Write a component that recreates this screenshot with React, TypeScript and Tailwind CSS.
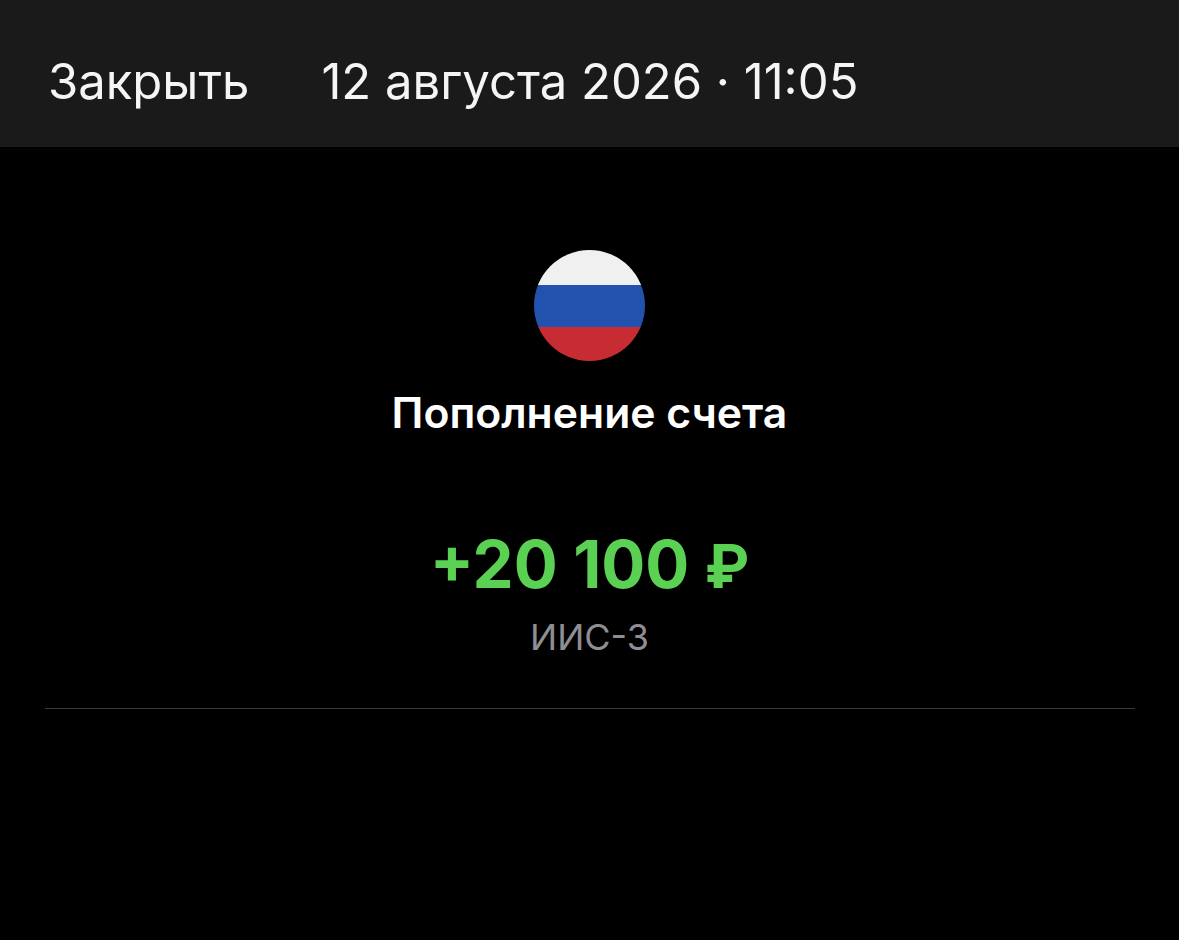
export default function App() {
  return (
    <div className="h-[940px] w-[1179px] overflow-hidden bg-black font-['Inter','Noto_Sans',sans-serif] text-white">
      <header className="flex h-[147px] items-center gap-[72px] bg-[#1a1a1a] pt-[15px] pl-[48px]">
        <span className="text-[49px] leading-none font-normal text-[#f5f5f5]">Закрыть</span>
        <span className="text-[49px] leading-none font-normal text-[#f5f5f5]">12 августа 2026 · 11:05</span>
      </header>

      <main className="flex flex-col items-center pt-[103px]">
        <div className="flex h-[111px] w-[111px] flex-col overflow-hidden rounded-full">
          <div className="h-[35px] bg-[#f0f0f0]" />
          <div className="h-[42px] bg-[#2251ae]" />
          <div className="h-[34px] bg-[#c62c32]" />
        </div>
        <h1 className="mt-[28px] text-[42.7px] leading-[48px] font-semibold">Пополнение счета</h1>
        <div className="mt-[93px] flex h-[70px] items-baseline text-[65.3px] leading-[70px] font-bold text-[#5ad153]">
          <span className="whitespace-pre">+20 100 </span>
          <span className="text-[60px] leading-none">₽</span>
        </div>
        <div className="mt-[15px] text-[36px] leading-[44px] text-[#8e8e93]">ИИС-3</div>
        <div className="mt-[49px] h-px w-[1090px] bg-[#3a3a3c]" />
      </main>
    </div>
  );
}
